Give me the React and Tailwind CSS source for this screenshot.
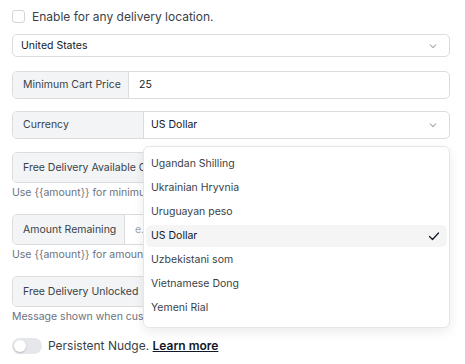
import React from 'react';

const currencies = [
  'Ugandan Shilling',
  'Ukrainian Hryvnia',
  'Uruguayan peso',
  'US Dollar',
  'Uzbekistani som',
  'Vietnamese Dong',
  'Yemeni Rial',
];

function Chevron() {
  return (
    <svg width="10" height="10" viewBox="0 0 24 24" fill="none" stroke="#9ca3af" strokeWidth="2.5" strokeLinecap="round" strokeLinejoin="round">
      <path d="M5 9l7 7 7-7" />
    </svg>
  );
}

function Check() {
  return (
    <svg width="12" height="12" viewBox="0 0 24 24" fill="none" stroke="#111827" strokeWidth="2.5" strokeLinecap="round" strokeLinejoin="round">
      <path d="M3 13l6 6L21 6" />
    </svg>
  );
}

// Input with a grey label on its left
function AddonRow({ label, labelWidth, height, children, className = '' }) {
  return (
    <div className={`relative flex ${height} rounded-[5px] border border-[#dcdcdc] ${className}`}>
      <div className={`${labelWidth} flex shrink-0 items-center rounded-l-[5px] border-r border-[#dcdcdc] bg-[#f3f4f6] pl-[10px] text-[10.5px] text-[#3a3f47]`}>
        {label}
      </div>
      {children}
    </div>
  );
}

// the open list covers everything right of x=143, so clipped texts stop there
function Clip({ width, children, className = '' }) {
  return <span className={`block overflow-hidden whitespace-nowrap ${width} ${className}`}>{children}</span>;
}

export default function App() {
  return (
    <div className="h-[364px] w-[465px] overflow-hidden bg-white pl-3 pr-[15px] pt-[6px] font-['Inter','Liberation_Sans',sans-serif]">
      {/* Enable checkbox */}
      <div className="flex h-[21px] items-center gap-[7px]">
        <div className="h-[13px] w-[13px] rounded-[3px] border border-[#d4d4d8] bg-white" />
        <span className="text-[12px] text-[#3a3f47]">Enable for any delivery location.</span>
      </div>

      {/* Country select */}
      <div className="mt-[7px] flex h-[23px] items-center justify-between rounded-[5px] border border-[#dcdcdc] pl-[8px] pr-[11px]">
        <span className="text-[10.5px] text-[#111827]">United States</span>
        <Chevron />
      </div>

      <AddonRow label="Minimum Cart Price" labelWidth="w-[116px]" height="h-[28px]" className="mt-[14px]">
        <div className="flex items-center pl-[10px] text-[10.5px] text-[#111827]">25</div>
      </AddonRow>

      <AddonRow label="Currency" labelWidth="w-[131px]" height="h-[28px]" className="z-10 mt-3">
        <div className="flex flex-1 items-center justify-between pl-[7px] pr-[11px] text-[10.5px] text-[#111827]">
          <span>US Dollar</span>
          <Chevron />
        </div>

        {/* Open currency list */}
        <div className="absolute left-[130px] right-[-1px] top-[34px] rounded-[6px] border border-[#e5e5e5] bg-white px-[2px] pt-[5px] pb-[7px] shadow-[0_4px_12px_rgba(0,0,0,0.08)]">
          {currencies.map((c) => (
            <div key={c} className="flex h-[24px] items-center">
              <div className={`flex h-[22px] flex-1 items-center justify-between rounded-[5px] pl-[5px] pr-[7px] text-[10.5px] ${c === 'US Dollar' ? 'bg-[#f5f5f5] text-[#111827]' : 'text-[#3a3f47]'}`}>
                <span>{c}</span>
                {c === 'US Dollar' && <Check />}
              </div>
            </div>
          ))}
        </div>
      </AddonRow>

      <AddonRow label={<Clip width="w-[121px]">Free Delivery Available Cart Message</Clip>} labelWidth="w-[220px]" height="h-[31px]" className="mt-[13px]" />
      <p className="mt-[2px] h-[16px] text-[10.5px] leading-[16px] text-[#6b7280]">
        <Clip width="w-[131px]">Use {'{{amount}}'} for minimum cart price in the message.</Clip>
      </p>

      <AddonRow label="Amount Remaining" labelWidth="w-[112px]" height="h-[31px]" className="mt-[13px]">
        <div className="flex items-center pl-[10px] text-[10.5px] text-[#a1a1aa]">
          <Clip width="w-[9px]">e.g. Only {'{{amount}}'} left</Clip>
        </div>
      </AddonRow>
      <p className="mt-[2px] h-[16px] text-[10.5px] leading-[16px] text-[#6b7280]">
        <Clip width="w-[131px]">Use {'{{amount}}'} for amount remaining in the message.</Clip>
      </p>

      <AddonRow label="Free Delivery Unlocked" labelWidth="w-[136px]" height="h-[31px]" className="mt-[13px]" />
      <p className="mt-[2px] h-[16px] text-[10.5px] leading-[16px] text-[#6b7280]">
        <Clip width="w-[131px]">Message shown when customer unlocks free delivery.</Clip>
      </p>

      {/* Persistent nudge toggle */}
      <div className="mt-[13px] flex h-[16px] items-center gap-[6px]">
        <div className="flex h-[16px] w-[30px] items-center rounded-full bg-[#e5e7eb] px-[2px]">
          <div className="h-[12px] w-[12px] rounded-full bg-white shadow-[0_1px_2px_rgba(0,0,0,0.2)]" />
        </div>
        <span className="text-[12px] text-[#3a3f47]">
          Persistent Nudge. <span className="font-semibold text-[#111827] underline">Learn more</span>
        </span>
      </div>
    </div>
  );
}
